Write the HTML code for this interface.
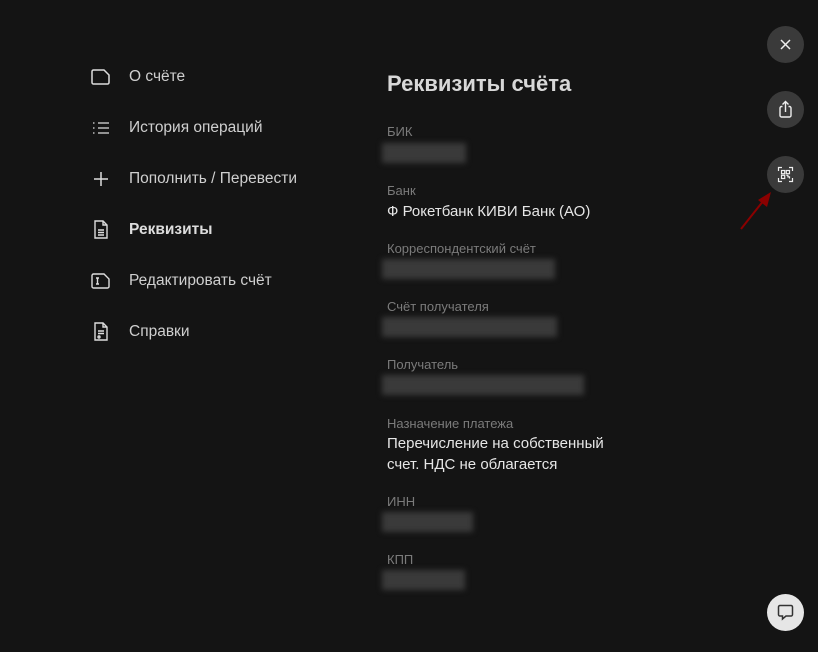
<!DOCTYPE html><html><head><meta charset="utf-8"><style>
body{margin:0;width:818px;height:652px;background:#141414;font-family:"Liberation Sans",sans-serif;position:relative;overflow:hidden;color:#d8d8d8}
.m{position:absolute;left:129px;font-size:15.5px;color:#cfcfcf}
.i{position:absolute;left:91px}
.l{position:absolute;left:387px;font-size:13px;color:#7b7b7b}
.v{position:absolute;left:387px;font-size:15px;color:#e6e6e6;line-height:21px}
.b{position:absolute;left:382px;height:20px;background:#3a3a3a;filter:blur(3px)}
.c{position:absolute;left:767px;width:37px;height:37px;border-radius:50%;background:#3a3a3a}
.c svg{position:absolute;left:0;top:0}
</style></head><body>
<svg class="i" style="top:68px" width="20" height="18" fill="none" stroke="#ddd" stroke-width="1.5"><path d="M2.5 2h10.5l5 5v7.5a1.5 1.5 0 0 1-1.5 1.5h-14A1.5 1.5 0 0 1 1 14.5V3.5A1.5 1.5 0 0 1 2.5 2z"/></svg>
<div class="m" style="top:68px">О счёте</div>
<svg class="i" style="top:120px" width="20" height="16" stroke="#ddd" stroke-width="1.3"><path d="M7 3h11M7 8h11M7 13h11M2 3h1.5M2 8h1.5M2 13h1.5"/></svg>
<div class="m" style="top:119px">История операций</div>
<svg class="i" style="top:170px" width="20" height="18" stroke="#ddd" stroke-width="1.5"><path d="M10 2v14M3 9h14"/></svg>
<div class="m" style="top:170px">Пополнить / Перевести</div>
<svg class="i" style="top:220px" width="20" height="20" fill="none" stroke="#ddd" stroke-width="1.4"><path d="M4 1h8l4 4v13H4z"/><path d="M12 1v4h4M7 10h6M7 12.5h6M7 15h6"/></svg>
<div class="m" style="top:221px;font-weight:bold;color:#ddd">Реквизиты</div>
<svg class="i" style="top:272px" width="20" height="18" fill="none" stroke="#ddd" stroke-width="1.4"><path d="M2.5 2h10.5l5 5v7.5a1.5 1.5 0 0 1-1.5 1.5h-14A1.5 1.5 0 0 1 1 14.5V3.5A1.5 1.5 0 0 1 2.5 2z"/><path d="M5 6h3M6.5 6v6M5 12h3"/></svg>
<div class="m" style="top:272px">Редактировать счёт</div>
<svg class="i" style="top:322px" width="20" height="20" fill="none" stroke="#ddd" stroke-width="1.4"><path d="M4 1h8l4 4v13H4z"/><path d="M12 1v4h4M7 9h6M7 11.5h6"/><circle cx="8" cy="15" r="1"/></svg>
<div class="m" style="top:323px">Справки</div>
<div style="position:absolute;left:387px;top:71px;font-size:22px;font-weight:bold;color:#d8d8d8">Реквизиты счёта</div>
<div class="l" style="top:124px">БИК</div><div class="b" style="top:143px;width:84px"></div>
<div class="l" style="top:183px">Банк</div><div class="v" style="top:201px">Ф Рокетбанк КИВИ Банк (АО)</div>
<div class="l" style="top:241px">Корреспондентский счёт</div><div class="b" style="top:259px;width:173px"></div>
<div class="l" style="top:299px">Счёт получателя</div><div class="b" style="top:317px;width:175px"></div>
<div class="l" style="top:357px">Получатель</div><div class="b" style="top:375px;width:202px"></div>
<div class="l" style="top:416px">Назначение платежа</div><div class="v" style="top:433px">Перечисление на собственный<br>счет. НДС не облагается</div>
<div class="l" style="top:494px">ИНН</div><div class="b" style="top:512px;width:91px"></div>
<div class="l" style="top:552px">КПП</div><div class="b" style="top:570px;width:83px"></div>
<div class="c" style="top:26px"><svg width="37" height="37" stroke="#eee" stroke-width="1.5"><path d="M14 14l9 9M23 14l-9 9"/></svg></div>
<div class="c" style="top:91px"><svg width="37" height="37" fill="none" stroke="#eee" stroke-width="1.4"><path d="M15.5 15.5h-1a1.5 1.5 0 0 0-1.5 1.5v7.5a1.5 1.5 0 0 0 1.5 1.5h8a1.5 1.5 0 0 0 1.5-1.5V17a1.5 1.5 0 0 0-1.5-1.5h-1M18.5 21V10.5M15.5 13.5l3-3 3 3"/></svg></div>
<div class="c" style="top:156px"><svg width="37" height="37" fill="none" stroke="#eee" stroke-width="1.2"><path d="M11.5 15v-3.5h3.5M22 11.5h3.5V15M25.5 22v3.5H22M15 25.5h-3.5V22"/><rect x="14.5" y="14.5" width="3.2" height="3.2"/><rect x="19.3" y="14.5" width="3.2" height="3.2"/><rect x="14.5" y="19.3" width="3.2" height="3.2"/><path d="M19.3 19.3h1.6v1.6h1.6v1.6"/></svg></div>
<svg style="position:absolute;left:738px;top:190px" width="36" height="42"><path d="M3 39L26 10" stroke="#8b0000" stroke-width="2"/><path d="M33 2L20 10l9 7z" fill="#8b0000"/></svg>
<div class="c" style="top:594px;background:#e6e6e6"><svg width="37" height="37" fill="none" stroke="#333" stroke-width="1.5"><path d="M13 11.5h11a1.5 1.5 0 0 1 1.5 1.5v7.5a1.5 1.5 0 0 1-1.5 1.5h-5l-3.5 3v-3H13a1.5 1.5 0 0 1-1.5-1.5V13a1.5 1.5 0 0 1 1.5-1.5z"/></svg></div>
</body></html>
